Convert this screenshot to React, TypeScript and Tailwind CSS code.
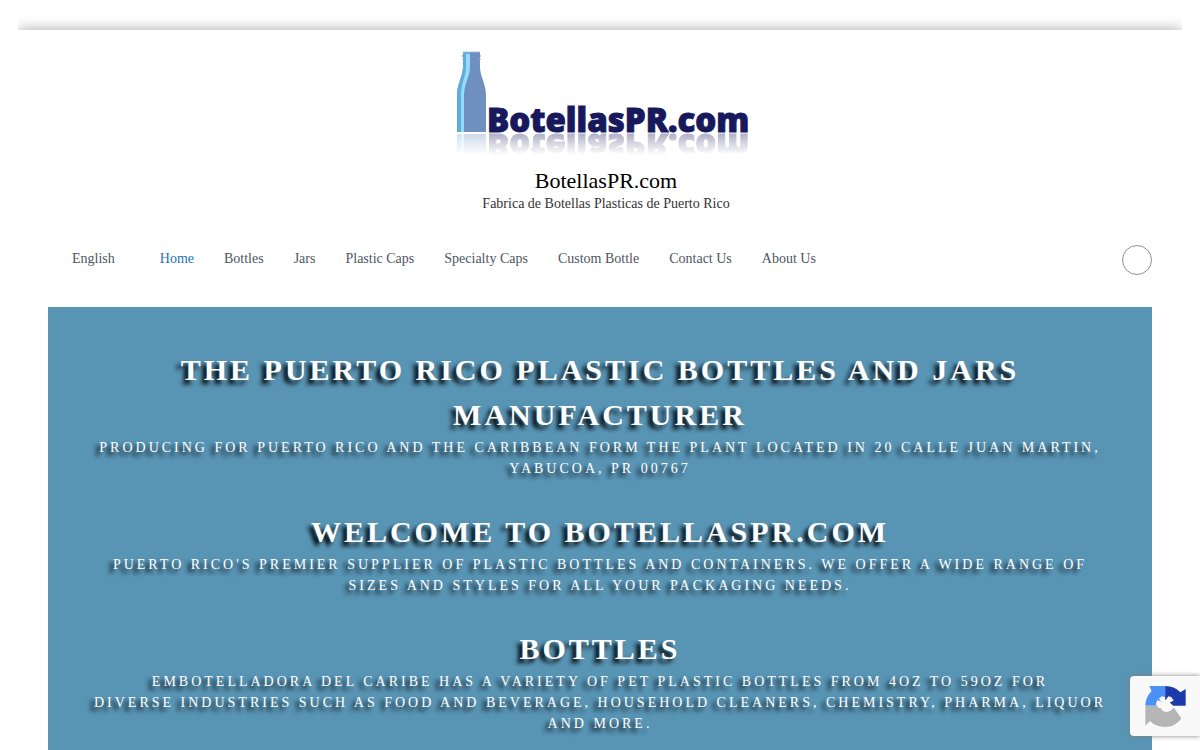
const navItems = [
  "Home",
  "Bottles",
  "Jars",
  "Plastic Caps",
  "Specialty Caps",
  "Custom Bottle",
  "Contact Us",
  "About Us",
];

const sections = [
  {
    title: "The Puerto Rico Plastic Bottles and Jars Manufacturer",
    text: "Producing for Puerto Rico and the Caribbean form the plant located in 20 Calle Juan Martin, Yabucoa, PR 00767",
  },
  {
    title: "Welcome to BotellasPR.com",
    text: "Puerto Rico's premier supplier of plastic bottles and containers. We offer a wide range of sizes and styles for all your packaging needs.",
  },
  {
    title: "Bottles",
    text: "Embotelladora del Caribe has a variety of PET plastic bottles from 4oz to 59oz for\ndiverse industries such as food and beverage, household cleaners, chemistry, pharma, liquor and more.",
  },
];

const Logo = () => (
  <svg viewBox="0 0 300 115" className="h-[115px] w-[300px]" role="img" aria-label="BotellasPR.com">
    <defs>
      <linearGradient id="fade" x1="0" y1="88" x2="0" y2="110" gradientUnits="userSpaceOnUse">
        <stop offset="0" stopColor="#fff" stopOpacity="0.36" />
        <stop offset="0.5" stopColor="#fff" stopOpacity="0.17" />
        <stop offset="1" stopColor="#fff" stopOpacity="0" />
      </linearGradient>
      <mask id="reflection" maskUnits="userSpaceOnUse" x="0" y="88" width="300" height="27">
        <rect y="88" width="300" height="27" fill="url(#fade)" />
      </mask>
    </defs>
    <g id="logo-art">
      <path
        d="M7 7h17v3l1 1-1 1v10c0 9 6 17 6 28v37H1V50c0-11 6-19 6-28V12l-1-1 1-1z"
        fill="#7090bf"
      />
      <path d="M7 7h7v15c0 9-6 17-6 28v37H1V50c0-11 6-19 6-28V12l-1-1 1-1z" fill="#62abdf" />
      <path d="M10 9h4v13c0 9-6 17-6 28v37H5V50c0-11 5-19 5-28z" fill="#94dcfb" />
      <path d="M7 7h17M6 14h3m14 0h2" stroke="#a3bad8" strokeWidth="1" strokeDasharray="2 1" />
      <text
        x="31"
        y="87"
        fontSize="33"
        fill="#17195c"
        stroke="#17195c"
        strokeWidth="1"
        className="font-['Open_Sans',sans-serif] font-extrabold"
      >
        BotellasPR.com
      </text>
    </g>
    <g mask="url(#reflection)" aria-hidden="true">
      <use href="#logo-art" transform="matrix(1 0 0 -1 0 176)" />
    </g>
  </svg>
);

const CaptchaBadge = () => (
  <div className="fixed bottom-[14px] right-0 flex h-[60px] w-[70px] items-center rounded-l-sm bg-[#f9f9f9] pl-[15px] shadow-[0_0_5px_gray]">
    <svg viewBox="0 0 122 124" className="size-[41px]" role="img" aria-label="reCAPTCHA">
      <path
        fill="#4a90f5"
        d="M12 0H60V33L50 31L41 38L48 48L37 42Q31 49 33 60H0Q0 34 19 15Z"
      />
      <path
        fill="#1c3aa9"
        d="M60 0Q88 0 106 19L122 9V60H84L74 50L86 44L78 33L70 31L60 44Z"
      />
      <path
        fill="#b5b5b5"
        d="M0 60H37Q38 69 46 66Q52 79 65 79Q77 77 86 65L109 98Q90 124 60 124Q32 124 14 106L0 120Z"
      />
    </svg>
  </div>
);

const App = () => {
  return (
    <div className="h-screen overflow-hidden bg-white font-['Liberation_Serif',serif] text-sm">
      <div className="mx-[18px] h-[30px] overflow-hidden">
        <div className="mt-[30px] h-10 shadow-[0_0_14px_rgba(0,0,0,0.36)]" />
      </div>

      <header className="px-12">
        <div className="flex flex-col items-center pl-3 pt-[15px]">
          <a href="#">
            <Logo />
          </a>
          <a href="#" className="mt-[7px] text-[22px] leading-[28px] text-black">
            BotellasPR.com
          </a>
          <p className="leading-[18px] text-[#333333]">Fabrica de Botellas Plasticas de Puerto Rico</p>
        </div>

        <div className="mt-8 flex items-center justify-between pl-6">
          <nav className="flex gap-[30px] pb-[2px] leading-5 text-[#4d5661]">
            <a href="#" className="mr-[15px]">
              English
            </a>
            {navItems.map((item) => (
              <a key={item} href="#" className={item === "Home" ? "text-[#1e73be]" : ""}>
                {item}
              </a>
            ))}
          </nav>
          <button
            type="button"
            aria-label="Search"
            className="size-[30px] rounded-full border border-[#8d9199]"
          />
        </div>
      </header>

      <main className="mx-12 mt-8 bg-[#5894b4] px-10 pb-10 pt-10 text-center uppercase tracking-[3px] text-white [text-shadow:-4px_4px_4px_#000]">
        {sections.map((section) => (
          <section key={section.title} className="mb-[30px]">
            <h2 className="text-[30px] font-bold leading-[45px]">{section.title}</h2>
            <p className="whitespace-pre-line leading-[21px]">{section.text}</p>
          </section>
        ))}
      </main>

      <CaptchaBadge />
    </div>
  );
};

export default App;
